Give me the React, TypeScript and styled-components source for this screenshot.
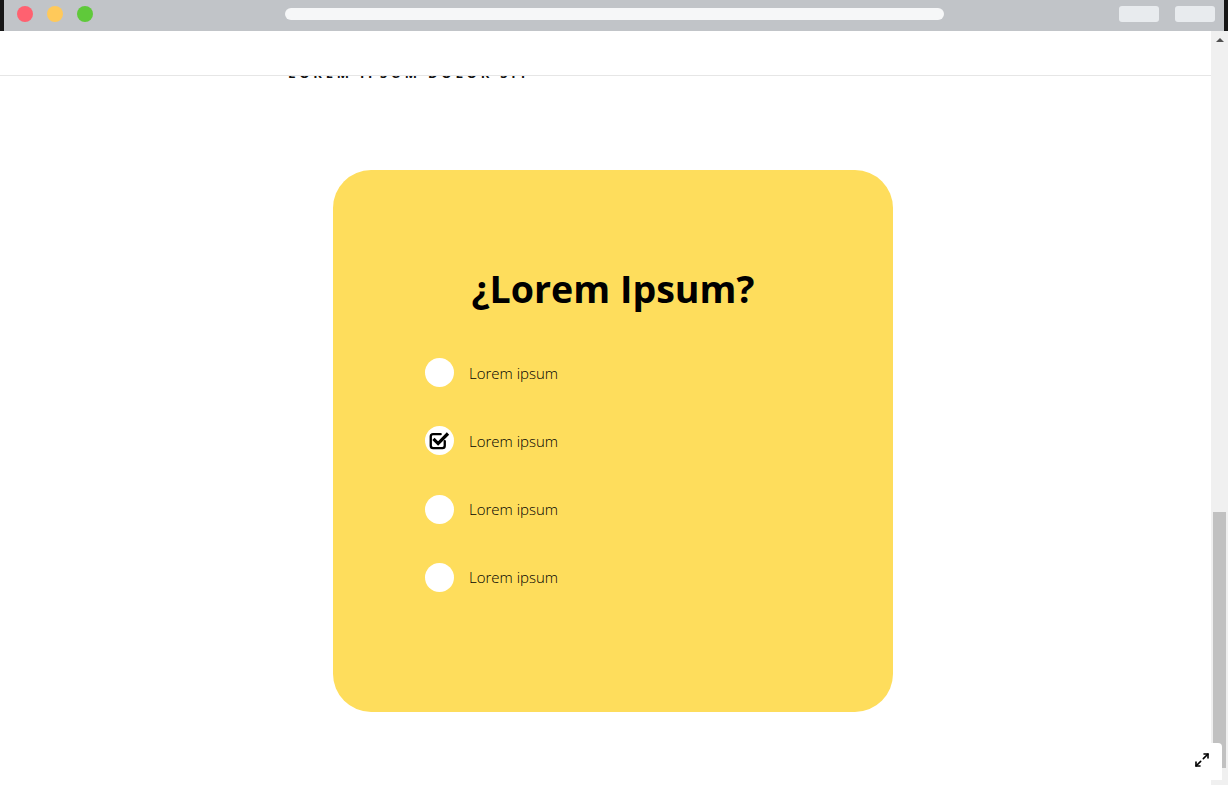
import React from "react";
import styled, { createGlobalStyle } from "styled-components";
import { Maximize2 } from "lucide-react";

const Global = createGlobalStyle`
  html, body { margin: 0; padding: 0; overflow: hidden; background: #fff; }
  * { box-sizing: border-box; }
`;

const Frame = styled.div`
  width: 1228px;
  height: 785px;
  display: flex;
  flex-direction: column;
  font-family: "Open Sans", "Liberation Sans", sans-serif;
  position: relative;
`;

const ChromeBar = styled.div`
  height: 31px;
  flex: 0 0 31px;
  background: #c1c4c8;
  border-left: 4px solid #161616;
  border-right: 4px solid #161616;
  display: flex;
  align-items: flex-start;
  padding: 6px 9px 0 13px;
`;

const Light = styled.span<{ $c: string }>`
  width: 16px;
  height: 16px;
  border-radius: 50%;
  background: ${(p) => p.$c};
  margin-right: 14px;
  flex: 0 0 auto;
`;

const Address = styled.div`
  width: 659px;
  height: 12px;
  margin-top: 2px;
  margin-left: 178px;
  border-radius: 6px;
  background: #f6f7f8;
`;

const ChromeButtons = styled.div`
  margin-left: auto;
  display: flex;
  gap: 16px;
`;

const ChromeButton = styled.span`
  width: 40px;
  height: 16px;
  border-radius: 3px;
  background: #e8ebee;
`;

const Viewport = styled.div`
  flex: 1;
  display: flex;
  min-height: 0;
`;

const Page = styled.div`
  flex: 1;
  position: relative;
  overflow: hidden;
  background: #fff;
`;

const Header = styled.div`
  position: absolute;
  top: 0;
  left: 0;
  right: 0;
  height: 45px;
  background: #fff;
  border-bottom: 1px solid #e6e6e6;
  z-index: 2;
`;

const Content = styled.div`
  display: flex;
  flex-direction: column;
  padding-top: 35px;
`;

const Kicker = styled.div`
  margin-left: 288px;
  font-size: 13px;
  line-height: 14px;
  font-weight: 700;
  letter-spacing: 3.8px;
  text-transform: uppercase;
  color: #111;
  white-space: nowrap;
`;

const Section = styled.section`
  display: flex;
  justify-content: center;
  padding-left: 15px;
  margin-top: 90px;
`;

const Card = styled.div`
  width: 560px;
  height: 542px;
  background: #fedd5c;
  border-radius: 38px;
  padding-top: 96px;
  display: flex;
  flex-direction: column;
`;

const Title = styled.h2`
  margin: 0;
  text-align: center;
  font-family: "Open Sans", sans-serif;
  font-weight: 700;
  font-size: 37.6px;
  line-height: 46px;
  color: #000;
`;

const Options = styled.ul`
  list-style: none;
  margin: 46px 0 0;
  padding: 0 0 0 92px;
  display: flex;
  flex-direction: column;
  gap: 39.3px;
`;

const Option = styled.li`
  display: flex;
  align-items: center;
  gap: 15px;
  height: 29px;
`;

const Dot = styled.span`
  width: 29px;
  height: 29px;
  border-radius: 50%;
  background: #fff;
  display: flex;
  align-items: center;
  justify-content: center;
  flex: 0 0 auto;
`;

const OptionLabel = styled.span`
  font-family: "Open Sans", sans-serif;
  font-weight: 300;
  font-size: 15px;
  color: #000;
`;

const Scrollbar = styled.div`
  width: 17px;
  flex: 0 0 17px;
  background: #f0f0f0;
  display: flex;
  flex-direction: column;
  align-items: center;
`;

const UpArrow = styled.span`
  margin-top: 7px;
  width: 0;
  height: 0;
  border-left: 4px solid transparent;
  border-right: 4px solid transparent;
  border-bottom: 4px solid #505050;
`;

const Thumb = styled.div`
  width: 13px;
  margin-top: 470px;
  height: 256px;
  background: #c1c1c1;
`;

const FullBtn = styled.div`
  position: absolute;
  right: 6px;
  bottom: 5px;
  width: 36px;
  height: 37px;
  background: #fff;
  border-top-right-radius: 4px;
  display: flex;
  align-items: center;
  justify-content: center;
  padding-bottom: 4px;
  padding-right: 4px;
  z-index: 3;
`;

const CheckIcon = () => (
  <svg width="21" height="21" viewBox="0 0 18 18" fill="none">
    <path
      d="M13.5 9.5 V13.5 Q13.5 15.5 11.5 15.5 H3.5 Q1.5 15.5 1.5 13.5 V5.5 Q1.5 3.5 3.5 3.5 H10"
      stroke="#000"
      strokeWidth="2"
      strokeLinecap="round"
      strokeLinejoin="round"
    />
    <path
      d="M4.8 8.6 L7.8 11.6 L15.3 4"
      stroke="#000"
      strokeWidth="2.8"
      strokeLinecap="square"
      strokeLinejoin="miter"
    />
  </svg>
);

const options = [false, true, false, false];

export default function App() {
  return (
    <Frame>
      <Global />
      <ChromeBar>
        <Light $c="#ff6170" />
        <Light $c="#ffc95a" />
        <Light $c="#5fc93a" />
        <Address />
        <ChromeButtons>
          <ChromeButton />
          <ChromeButton />
        </ChromeButtons>
      </ChromeBar>
      <Viewport>
        <Page>
          <Header />
          <Content>
            <Kicker>Lorem ipsum dolor sit</Kicker>
            <Section>
              <Card>
                <Title>¿Lorem Ipsum?</Title>
                <Options>
                  {options.map((checked, i) => (
                    <Option key={i}>
                      <Dot>{checked && <CheckIcon />}</Dot>
                      <OptionLabel>Lorem ipsum</OptionLabel>
                    </Option>
                  ))}
                </Options>
              </Card>
            </Section>
          </Content>
        </Page>
        <Scrollbar>
          <UpArrow />
          <Thumb />
        </Scrollbar>
      </Viewport>
      <FullBtn>
        <Maximize2 size={16} strokeWidth={2.4} color="#000" />
      </FullBtn>
    </Frame>
  );
}
